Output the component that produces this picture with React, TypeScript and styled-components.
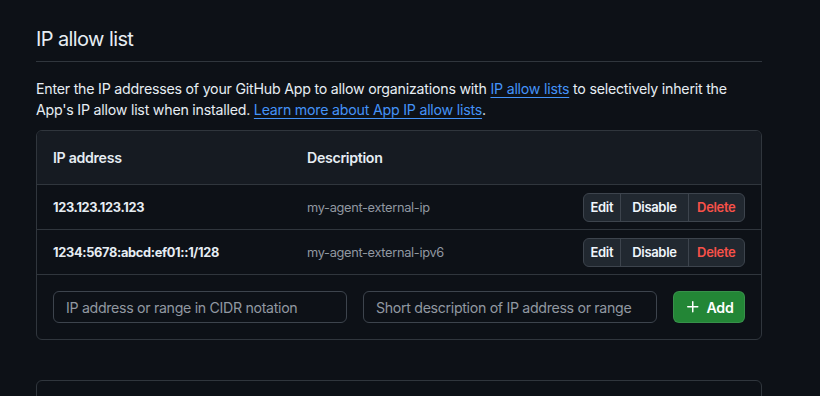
import React from "react";
import styled, { createGlobalStyle } from "styled-components";

const Global = createGlobalStyle`
  html, body { margin: 0; padding: 0; background: #0d1117; }
  body { font-family: Inter, "Noto Sans", "Liberation Sans", sans-serif; color: #e6edf3; letter-spacing: -0.02em; }
  * { box-sizing: border-box; }
`;

const Page = styled.div`
  padding: 24px 58px 0 36px;
  height: 396px;
  overflow: hidden;
`;

const Heading = styled.h2`
  margin: 0;
  font-size: 20px;
  font-weight: 400;
  line-height: 30px;
  padding-bottom: 7px;
  border-bottom: 1px solid #30363d;
  letter-spacing: -0.6px;
`;

const Intro = styled.p`
  margin: 16px 0 10px;
  font-size: 14.2px;
  line-height: 21px;
  letter-spacing: -0.22px;
  color: #e6edf3;
`;

const Link = styled.a`
  color: #4493f8;
  text-decoration: underline;
  text-underline-offset: 3px;
`;

const Box = styled.div`
  border: 1px solid #30363d;
  border-radius: 6px;
  overflow: hidden;
`;

const Row = styled.div<{ $head?: boolean; $h: number }>`
  display: grid;
  grid-template-columns: 254px 1fr auto;
  align-items: center;
  height: ${(p) => p.$h}px;
  padding: 0 16px;
  background: ${(p) => (p.$head ? "#161b22" : "#0d1117")};
  border-bottom: 1px solid #30363d;
`;

const HeadCell = styled.div`
  font-size: 14.2px;
  font-weight: 600;
  color: #e6edf3;
`;

const Ip = styled.div`
  font-size: 12.8px;
  font-weight: 700;
  color: #e6edf3;
`;

const Desc = styled.div`
  font-size: 12.8px;
  color: #9198a1;
`;

const Group = styled.div`
  display: flex;
  border: 1px solid #3d444d;
  border-radius: 6px;
  overflow: hidden;
  height: 29px;
  background: #212830;
`;

const GroupBtn = styled.button<{ $danger?: boolean; $pad: number }>`
  background: transparent;
  border: 0;
  border-left: 1px solid #3d444d;
  &:first-child { border-left: 0; }
  color: ${(p) => (p.$danger ? "#f85149" : "#f0f6fc")};
  font-family: inherit;
  letter-spacing: inherit;
  font-size: 13px;
  font-weight: 600;
  padding: 0 ${(p) => p.$pad}px;
  cursor: pointer;
`;

const Form = styled.div`
  display: grid;
  grid-template-columns: 294px 294px auto;
  gap: 16px;
  align-items: center;
  padding: 16px 16px 16px;
`;

const Input = styled.input`
  height: 32px;
  border: 1px solid #3d444d;
  border-radius: 6px;
  background: #0d1117;
  color: #e6edf3;
  font-family: inherit;
  letter-spacing: inherit;
  font-size: 14.2px;
  padding: 0 12px;
  &::placeholder { color: #9198a1; }
`;

const AddBtn = styled.button`
  display: flex;
  align-items: center;
  gap: 6px;
  height: 32px;
  width: 72px;
  justify-content: center;
  background: #238636;
  border: 1px solid rgba(240, 246, 252, 0.1);
  border-radius: 6px;
  color: #fff;
  font-family: inherit;
  letter-spacing: inherit;
  font-size: 14.2px;
  font-weight: 600;
`;

const NextBox = styled.div`
  margin-top: 40px;
  height: 40px;
  border: 1px solid #30363d;
  border-radius: 6px;
`;

const entries = [
  { ip: "123.123.123.123", desc: "my-agent-external-ip" },
  { ip: "1234:5678:abcd:ef01::1/128", desc: "my-agent-external-ipv6" },
];

export default function App() {
  return (
    <>
      <Global />
      <Page>
        <Heading>IP allow list</Heading>
        <Intro>
          Enter the IP addresses of your GitHub App to allow organizations with{" "}
          <Link>IP allow lists</Link> to selectively inherit the App's IP allow list when installed.{" "}
          <Link>Learn more about App IP allow lists</Link>.
        </Intro>
        <Box>
          <Row $head $h={54}>
            <HeadCell>IP address</HeadCell>
            <HeadCell>Description</HeadCell>
            <span />
          </Row>
          {entries.map((e) => (
            <Row key={e.ip} $h={45}>
              <Ip>{e.ip}</Ip>
              <Desc>{e.desc}</Desc>
              <Group>
                <GroupBtn $pad={7}>Edit</GroupBtn>
                <GroupBtn $pad={11}>Disable</GroupBtn>
                <GroupBtn $pad={8.5} $danger>Delete</GroupBtn>
              </Group>
            </Row>
          ))}
          <Form>
            <Input placeholder="IP address or range in CIDR notation" />
            <Input placeholder="Short description of IP address or range" />
            <AddBtn>
              <svg width="16" height="16" viewBox="0 0 16 16" fill="currentColor">
                <path d="M7.75 2a.75.75 0 0 1 .75.75V7h4.25a.75.75 0 0 1 0 1.5H8.5v4.25a.75.75 0 0 1-1.5 0V8.5H2.75a.75.75 0 0 1 0-1.5H7V2.75A.75.75 0 0 1 7.75 2Z" />
              </svg>
              Add
            </AddBtn>
          </Form>
        </Box>
        <NextBox />
      </Page>
    </>
  );
}
